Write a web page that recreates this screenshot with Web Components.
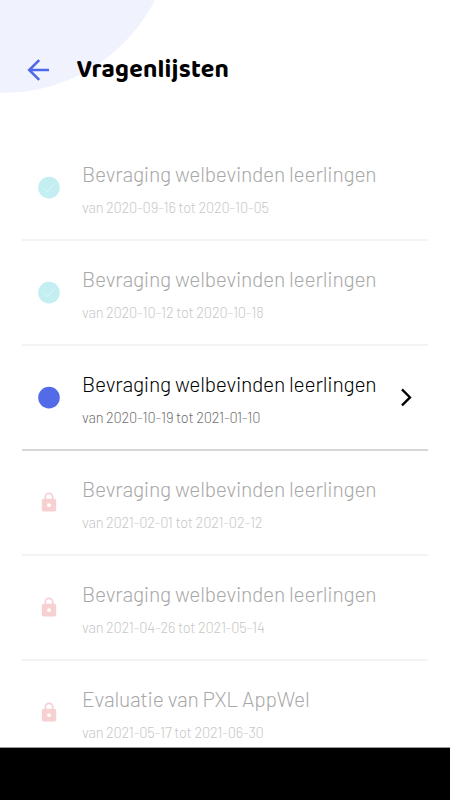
<!DOCTYPE html>
<html lang="nl">
<head>
<meta charset="utf-8">
<meta name="viewport" content="width=device-width, initial-scale=1">
<title>Vragenlijsten</title>
<style>
  html, body { margin: 0; height: 100%; background: #fff; }
  body { font-family: Barlow, Roboto, "Liberation Sans", sans-serif; overflow: hidden; }
</style>
</head>
<body>
<survey-app>
  <app-header slot="header">Vragenlijsten</app-header>
  <survey-item state="done">Bevraging welbevinden leerlingen<span slot="period">van 2020-09-16 tot 2020-10-05</span></survey-item>
  <survey-item state="done">Bevraging welbevinden leerlingen<span slot="period">van 2020-10-12 tot 2020-10-18</span></survey-item>
  <survey-item state="open">Bevraging welbevinden leerlingen<span slot="period">van 2020-10-19 tot 2021-01-10</span></survey-item>
  <survey-item state="locked">Bevraging welbevinden leerlingen<span slot="period">van 2021-02-01 tot 2021-02-12</span></survey-item>
  <survey-item state="locked">Bevraging welbevinden leerlingen<span slot="period">van 2021-04-26 tot 2021-05-14</span></survey-item>
  <survey-item state="locked">Evaluatie van PXL AppWel<span slot="period">van 2021-05-17 tot 2021-06-30</span></survey-item>
</survey-app>

<script>
class SurveyApp extends HTMLElement {
	connectedCallback() {
		this.attachShadow({ mode: 'open' });
		this.shadowRoot.innerHTML = `
      <style>
        :host {
          display: flex;
          flex-direction: column;
          height: 100vh;
          overflow: hidden;
        }
        main {
          flex: 1;
          min-height: 0;
          overflow: hidden;
          padding: 0 22px;
        }
        /* system navigation bar */
        footer { flex: none; height: 52px; background: #000; border-top: 1px solid #999; }
      </style>
      <slot name="header"></slot>
      <main><slot></slot></main>
      <footer></footer>
    `;
	}
}

class AppHeader extends HTMLElement {
	connectedCallback() {
		this.attachShadow({ mode: 'open' });
		this.shadowRoot.innerHTML = `
      <style>
        :host {
          display: flex;
          position: relative;
          flex: none;
          box-sizing: border-box;
          height: 136px;
          padding: 54px 0 0 27px;
          align-items: flex-start;
        }
        .blob {
          position: absolute;
          left: 0; top: 0;
          width: 160px; height: 94px;
        }
        .back { position: relative; width: 23px; height: 32px; margin-right: 26.5px; }
        h1 {
          position: relative;
          margin: 0;
          font: 700 25px/32px "Baloo 2", "Open Sans", sans-serif;
          letter-spacing: 0.2px;
          color: #000;
        }
      </style>
      <svg class="blob" viewBox="0 0 160 94"><circle cx="3" cy="-78" r="171" fill="#f0f3fe"/></svg>
      <svg class="back" viewBox="0 0 23 32" fill="none" stroke="#4f68ea" stroke-width="2.5">
        <path d="M22 16H2.4M12.2 6.2L2.2 16L12.2 25.8"/>
      </svg>
      <h1><slot></slot></h1>
    `;
	}
}

const ICONS = {
	done: `<svg viewBox="0 0 22 22"><circle cx="11" cy="10.6" r="10.8" fill="#c3eef2"/>
    <path d="M5.5 11.1L9.3 14.6L16.8 6.6" fill="none" stroke="#daf3f6" stroke-width="1.1"/></svg>`,
	open: `<svg viewBox="0 0 22 22"><circle cx="11" cy="10.6" r="10.8" fill="#536be6"/></svg>`,
	locked: `<svg viewBox="0 0.8 22 22"><path fill="#f7d0d2" fill-rule="evenodd" d="M5.6 7.5H6.5V5.8a4.5 4.5 0 0 1 9 0V7.5H16.4a1.8 1.8 0 0 1 1.8 1.8V18.6a1.8 1.8 0 0 1-1.8 1.8H5.6a1.8 1.8 0 0 1-1.8-1.8V9.3a1.8 1.8 0 0 1 1.8-1.8zM8.2 7.5H13.8V5.8a2.8 2.8 0 0 0-5.6 0zM11 12a1.95 1.95 0 1 0 0 3.9a1.95 1.95 0 0 0 0-3.9z"/></svg>`,
};

class SurveyItem extends HTMLElement {
	connectedCallback() {
		const state = this.getAttribute('state');
		this.attachShadow({ mode: 'open' });
		this.shadowRoot.innerHTML = `
      <style>
        :host {
          display: flex;
          box-sizing: border-box;
          height: 105px;
          padding: 0 10px 0 16px;
          align-items: center;
          border-bottom: 2px solid #f3f3f3;
          color: #a8a8a8;
        }
        :host([state="open"]) { color: #000; border-color: #d6d6d6; }
        .icon { width: 22px; height: 22px; margin: 0 22px 0 0; }
        .icon svg { display: block; overflow: visible; }
        .text { flex: 1; padding-top: 1px; white-space: nowrap; }
        .title { font-size: 21px; font-weight: 300; line-height: 28px; letter-spacing: -0.22px; }
        .period { margin-top: 9px; font-size: 14.6px; font-weight: 300; line-height: 20px; letter-spacing: -0.2px; color: #c8c8c8; }
        :host([state="open"]) .period { color: #707070; }
        .chevron { width: 24px; height: 24px; }
      </style>
      <div class="icon">${ICONS[state]}</div>
      <div class="text">
        <div class="title"><slot></slot></div>
        <div class="period"><slot name="period"></slot></div>
      </div>
      ${state === 'open' ? `<svg class="chevron" viewBox="0 0 24 24" fill="none" stroke="#000" stroke-width="2.3"><path d="M8 3.4L16 11.4L8 19.4"/></svg>` : ''}
    `;
	}
}

customElements.define('survey-app', SurveyApp);
customElements.define('app-header', AppHeader);
customElements.define('survey-item', SurveyItem);
</script>
</body>
</html>
